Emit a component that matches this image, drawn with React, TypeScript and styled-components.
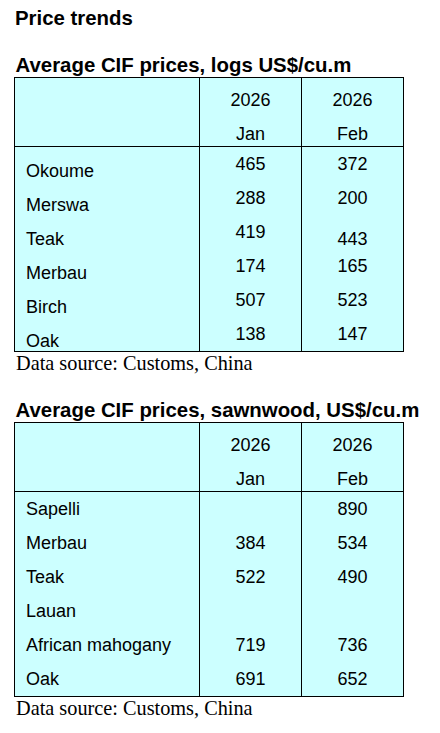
import styled, { createGlobalStyle } from "styled-components";

const GlobalStyle = createGlobalStyle`
    body {
        margin: 0;
        background: #ffffff;
    }
`

const Page = styled.main`
    padding: 7px 0 0 14px;
    font-family: "Liberation Sans", Arial, sans-serif;
    color: #000000;
`

const PageTitle = styled.h1`
    margin: 0 0 24px;
    padding-left: 1px;
    font-size: 20.4px;
    font-weight: 700;
    line-height: 23px;
`

const Section = styled.section`
    & + & {
        margin-top: 24px;
    }
`

const Heading = styled.h2`
    margin: 0;
    padding-left: 1.5px;
    font-size: 20.4px;
    font-weight: 700;
    line-height: 23px;
    white-space: nowrap;
`

const PriceGrid = styled.div`
    display: grid;
    grid-template-columns: 185px 102px 101px;
    grid-template-rows: 69px repeat(6, 34px);
    width: max-content;
    border: 1px solid #000000;
    background: #ccffff;
    font-size: 18px;
`

const HeadCell = styled.div<{ $last?: boolean }>`
    box-sizing: border-box;
    padding-top: 5px;
    border-bottom: 1px solid #000000;
    border-right: ${(p) => (p.$last ? "none" : "1px solid #000000")};
    line-height: 34px;
    text-align: center;
`

const Cell = styled.div<{ $low?: boolean; $label?: boolean; $last?: boolean }>`
    display: flex;
    align-items: ${(p) => (p.$low ? "flex-end" : "center")};
    justify-content: ${(p) => (p.$label ? "flex-start" : "center")};
    padding-left: ${(p) => (p.$label ? "11px" : "0")};
    border-right: ${(p) => (p.$last ? "none" : "1px solid #000000")};
    line-height: 20px;
    white-space: nowrap;
`

const Source = styled.p`
    margin: 0;
    padding-left: 2px;
    font-family: "Liberation Serif", "Times New Roman", serif;
    font-size: 20.3px;
    line-height: 23px;
`

type Row = {
    name: string
    jan: string
    feb: string
    low?: Array<"name" | "jan" | "feb">
}

const logRows: Row[] = [
    { name: "Okoume", jan: "465", feb: "372", low: ["name"] },
    { name: "Merswa", jan: "288", feb: "200", low: ["name"] },
    { name: "Teak", jan: "419", feb: "443", low: ["name", "feb"] },
    { name: "Merbau", jan: "174", feb: "165", low: ["name"] },
    { name: "Birch", jan: "507", feb: "523", low: ["name"] },
    { name: "Oak", jan: "138", feb: "147", low: ["name"] },
]

const sawnRows: Row[] = [
    { name: "Sapelli", jan: "", feb: "890" },
    { name: "Merbau", jan: "384", feb: "534" },
    { name: "Teak", jan: "522", feb: "490" },
    { name: "Lauan", jan: "", feb: "" },
    { name: "African mahogany", jan: "719", feb: "736" },
    { name: "Oak", jan: "691", feb: "652" },
]

function PriceTable({ title, rows }: { title: string; rows: Row[] }) {
    return (
        <Section>
            <Heading>{title}</Heading>
            <PriceGrid>
                <HeadCell />
                <HeadCell>2026<br />Jan</HeadCell>
                <HeadCell $last>2026<br />Feb</HeadCell>
                {rows.map((r) => (
                    <>
                        <Cell key={r.name + "-n"} $label $low={r.low?.includes("name")}>{r.name}</Cell>
                        <Cell key={r.name + "-j"} $low={r.low?.includes("jan")}>{r.jan}</Cell>
                        <Cell key={r.name + "-f"} $last $low={r.low?.includes("feb")}>{r.feb}</Cell>
                    </>
                ))}
            </PriceGrid>
            <Source>Data source: Customs, China</Source>
        </Section>
    )
}

export default function App() {
    return (
        <Page>
            <GlobalStyle />
            <PageTitle>Price trends</PageTitle>
            <PriceTable title="Average CIF prices, logs US$/cu.m" rows={logRows} />
            <PriceTable title="Average CIF prices, sawnwood, US$/cu.m" rows={sawnRows} />
        </Page>
    )
}
